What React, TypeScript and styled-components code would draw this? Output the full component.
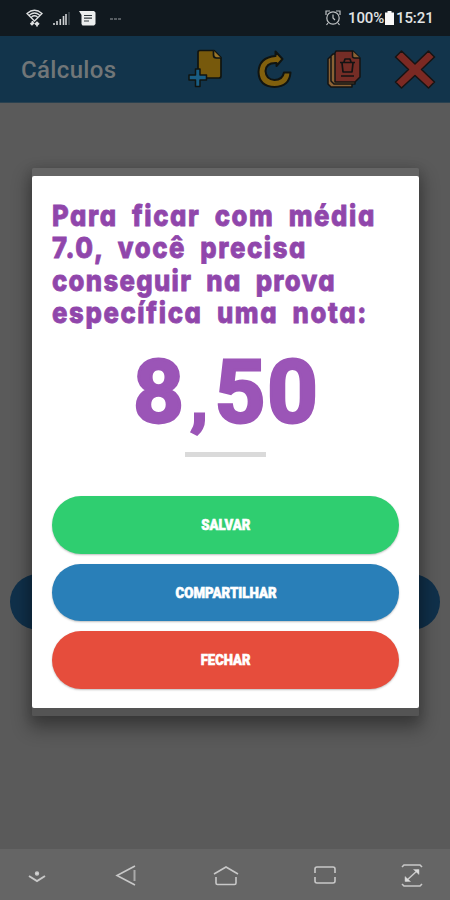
import React from "react";
import styled, { createGlobalStyle } from "styled-components";

const GlobalStyle = createGlobalStyle`
  * { box-sizing: border-box; }
  body { margin: 0; font-family: Roboto, "Liberation Sans", sans-serif; }
`;

const Screen = styled.div`
  position: relative;
  width: 450px;
  height: 900px;
  display: flex;
  flex-direction: column;
  overflow: hidden;
  background: #5a5a5a;
`;

const StatusBar = styled.header`
  height: 36px;
  flex: none;
  display: flex;
  align-items: center;
  padding: 0 18px 0 26px;
  background: #11191f;
  color: #e2e4e5;
`;

const StatusIcons = styled.div`
  flex: 1;
  display: flex;
  align-items: center;
`;

const StatusText = styled.span<{ $width: number; $left: number }>`
  width: ${(p) => p.$width}px;
  margin-left: ${(p) => p.$left}px;
  font-size: 15px;
  line-height: 18px;
  font-weight: 500;
  letter-spacing: -0.1px;
  white-space: nowrap;
`;

const AppBar = styled.div`
  height: 67px;
  flex: none;
  display: flex;
  align-items: center;
  padding: 2px 15px 0 21px;
  background: #12344b;
  border-bottom: 1px solid #294150;
`;

const AppTitle = styled.h1`
  margin: 0;
  width: 167px;
  font-size: 24px;
  line-height: 28px;
  font-weight: 500;
  letter-spacing: 0.35px;
  color: #717678;
`;

const Actions = styled.div`
  flex: 1;
  display: flex;
  justify-content: space-between;
  align-items: center;
`;

const Page = styled.main`
  flex: 1;
  padding: 471px 10px 0;
`;

const PageButton = styled.div`
  height: 56px;
  border-radius: 28px;
  background: #10304a;
`;

const NavBar = styled.nav`
  height: 51px;
  flex: none;
  display: flex;
  align-items: center;
  padding: 2px 0 0 23px;
  background: #656565;
`;

const Overlay = styled.div`
  position: absolute;
  inset: 168px 31px auto 32px;
  padding: 8px 0;
  border-radius: 2px;
  background: linear-gradient(#656565 0 50%, #545454 50%);
  box-shadow: 0 10px 18px 3px rgba(0, 0, 0, 0.33), 0 2px 12px rgba(0, 0, 0, 0.14);
`;

const Dialog = styled.section`
  height: 532px;
  display: flex;
  flex-direction: column;
  align-items: center;
  padding: 24px 20px 0;
  border-radius: 2px;
  background: #fff;
`;

const Message = styled.p`
  margin: 0;
  width: 100%;
  color: #9046ab;
  font-family: Inter, Roboto, sans-serif;
  font-feature-settings: "cv11";
  font-size: 29px;
  line-height: 32.3px;
  font-weight: 800;
  -webkit-text-stroke: 0.8px #9046ab;
`;

const Line = styled.span<{ $letter: number }>`
  display: block;
  white-space: nowrap;
  word-spacing: 8px;
  letter-spacing: ${(p) => p.$letter}px;
  transform: scaleX(0.885);
  transform-origin: left;
`;

const Grade = styled.div`
  margin-top: 15px;
  height: 96px;
  line-height: 96px;
  display: flex;
  align-items: baseline;
  justify-content: center;
  color: #9b55b7;
  font-size: 88px;
  font-weight: 700;
  -webkit-text-stroke: 3px #9b55b7;
`;

const Digit = styled.span<{ $gap: number }>`
  letter-spacing: ${(p) => p.$gap}px;
`;

const Comma = styled.span`
  width: 29px;
  padding-left: 5px;
  font-size: 68px;
  line-height: 0;
`;

const Rule = styled.hr`
  margin: 12px 0 39px;
  width: 81px;
  height: 5px;
  border: 0;
  background: #dadada;
`;

const Buttons = styled.div`
  width: 100%;
  display: grid;
  gap: 10px;
`;

const Button = styled.button<{ $color: string }>`
  height: 57.5px;
  padding: 1px 0 0 1px;
  border: 0;
  border-radius: 29px;
  background: ${(p) => p.$color};
  box-shadow: 0 1px 2px rgba(0, 0, 0, 0.25);
  color: #fff;
  font: 900 15px Roboto, "Liberation Sans", sans-serif;
  -webkit-text-stroke: 0.6px #fff;
`;

const Caption = styled.span<{ $squeeze: number }>`
  display: inline-block;
  transform: scaleX(${(p) => p.$squeeze});
`;

const Icon = styled.svg<{ $left?: number }>`
  display: block;
  flex: none;
  margin-left: ${(p) => p.$left ?? 0}px;
  overflow: visible;
`;

const WifiIcon = () => (
  <Icon width="17" height="18" viewBox="0 0 17 18" fill="none" stroke="#dddfe0" strokeWidth="1.3">
    <path d="M1 4.500Q8.500 -2 16 4.500L8.500 12ZM3.500 6Q8.500 2 13.500 6M5.500 8Q8.500 5.500 11.500 8" />
    <path d="M6.500 12v3M4.500 14L6 15.500l2-2M11 17.500v-4M9 15.500l2-2l2 2" strokeWidth="1.8" />
  </Icon>
);

const SignalIcon = () => (
  <Icon $left={10} width="17" height="15" viewBox="0 0 17 15" fill="none" stroke="#d0d2d4" strokeWidth="1.6">
    <path d="M1 14v-2M4 14v-4M7.300 14V8M10.500 14V5M13 14V3" />
    <path d="M16 14V1" stroke="#515960" strokeWidth="1.2" />
  </Icon>
);

const MessageIcon = () => (
  <Icon $left={9} width="17" height="15" viewBox="0 0 17 15">
    <path d="M0 0h15l1.500 1.500V13L15 14.500H3.500L2.500 13V4Z" fill="#eceeee" />
    <path d="M5 4.500h8M5 7.200h8M5 10h5" stroke="#30383d" strokeWidth="1.2" />
  </Icon>
);

const MoreIcon = () => (
  <Icon $left={14} width="11" height="3" viewBox="0 0 11 3">
    <path d="M0 2h3M4 2h3M8 2h3" stroke="#9ba0a3" strokeWidth="1.2" />
  </Icon>
);

const AlarmIcon = () => (
  <Icon width="16" height="16" viewBox="0 0 16 16" fill="none" stroke="#c0c3c5" strokeWidth="1.2">
    <circle cx="8" cy="8" r="6.200" />
    <path d="M1 5V1h4M11 1h4v4M3 13l-1.500 2M13 13l1.500 2M8 4.500V8l2 2" />
  </Icon>
);

const BatteryIcon = () => (
  <Icon width="9" height="14" viewBox="0 0 9 14">
    <path d="M2.500 0h4v1.500H9V14H0V1.500h2.500Z" fill="#f8f8f8" />
  </Icon>
);

const AddFileIcon = () => (
  <Icon width="34" height="40" viewBox="0 0 34 40" stroke="#101411" strokeWidth="1.700" strokeLinejoin="round">
    <path d="M12 0.500h14l7 7V26q0 2-2 2H12q-2 0-2-2V2.500q0-2 2-2Z" fill="#77590c" />
    <path d="M25.500 0.500V5q0 3 3 3h4.500" fill="#99752a" />
    <path d="M7.500 19h4.500v6h6.500v5H12v6.500H7.500V30H1v-5h6.500Z" fill="#195d83" strokeWidth="1.500" />
  </Icon>
);

const RefreshIcon = () => (
  <Icon width="36" height="40" viewBox="0 0 36 40">
    <path
      d="M19.500 1.500L26.500 9L20.500 16V13Q10 12.500 9.500 21Q10 29.500 18.500 30Q26.500 30 28 22.500H34.500Q33.500 36.500 18.500 37Q3 36.500 2.500 22Q3 7.500 19.500 6Z"
      fill="#81600d"
      stroke="#101411"
      strokeWidth="2"
      strokeLinejoin="round"
    />
  </Icon>
);

const TrashFilesIcon = () => (
  <Icon width="35" height="40" viewBox="0 0 35 40" stroke="#131313" strokeWidth="1.500" strokeLinejoin="round">
    <path d="M4 7h22v30H5l-3-3V9Z" fill="#8a6235" />
    <path d="M7 4h22v30H8l-3-3V6Z" fill="#8a6235" />
    <path d="M10 1h17l7 7v19l-5 5H9V3Z" fill="#752d26" />
    <path d="M26.500 1v5q0 2 2 2H34" fill="#8a6235" />
    <path d="M16 13l1 9h9l1-9M14 12.500h15M18 12l1-3h5l1 3M15 26h13" fill="none" strokeWidth="1.700" />
  </Icon>
);

const CloseIcon = () => (
  <Icon width="40" height="40" viewBox="0 0 40 40">
    <path
      d="M6.500 1L20 14L33.500 1L39.500 7L26.500 19.500L39.500 32L33.500 38L20 25.500L6.500 38L0.500 32L13.500 19.500L0.500 7Z"
      fill="#7b2923"
      stroke="#171313"
      strokeWidth="1.500"
      strokeLinejoin="round"
    />
  </Icon>
);

const NavIcon = ({ width, left = 0, children }: { width: number; left?: number; children: React.ReactNode }) => (
  <Icon
    $left={left}
    width={width}
    height="24"
    viewBox={`0 0 ${width} 24`}
    fill="none"
    stroke="#c8c8c8"
    strokeWidth="1.600"
  >
    {children}
  </Icon>
);

const message = [
  { text: "Para ficar com média", letter: 1.8 },
  { text: "7.0, você precisa", letter: 1.8 },
  { text: "conseguir na prova", letter: 1.5 },
  { text: "específica uma nota:", letter: 1.85 },
];

const actions = [
  { label: "SALVAR", color: "#2fce70", squeeze: 0.88 },
  { label: "COMPARTILHAR", color: "#297fb8", squeeze: 0.885 },
  { label: "FECHAR", color: "#e64d3c", squeeze: 0.87 },
];

export default function App() {
  return (
    <Screen>
      <GlobalStyle />
      <StatusBar>
        <StatusIcons>
          <WifiIcon />
          <SignalIcon />
          <MessageIcon />
          <MoreIcon />
        </StatusIcons>
        <AlarmIcon />
        <StatusText $width={37} $left={7}>100%</StatusText>
        <BatteryIcon />
        <StatusText $width={36} $left={2}>15:21</StatusText>
      </StatusBar>
      <AppBar>
        <AppTitle>Cálculos</AppTitle>
        <Actions>
          <AddFileIcon />
          <RefreshIcon />
          <TrashFilesIcon />
          <CloseIcon />
        </Actions>
      </AppBar>
      <Page>
        <PageButton />
      </Page>
      <NavBar>
        <NavIcon width={28}>
          <path d="M6 12l8 5l8-5" strokeWidth="2" />
          <circle cx="14" cy="9.500" r="1.400" fill="#eee" />
        </NavIcon>
        <NavIcon width={20} left={65}>
          <path d="M19 2L1 11.500L19 21" />
          <path d="M18.500 6v11" stroke="#aaa" strokeWidth="2" />
        </NavIcon>
        <NavIcon width={26} left={77}>
          <path d="M1 10L13 3l12 7M3 13v6q0 1.500 1.500 1.500h17Q23 20.500 23 19v-6" />
        </NavIcon>
        <NavIcon width={22} left={75}>
          <path d="M1 9V5q0-2 2-2h16q2 0 2 2v4M1 13v4q0 2 2 2h16q2 0 2-2v-4" />
        </NavIcon>
        <NavIcon width={22} left={65}>
          <path d="M1 3l2-2h16l2 2M1 20l2 2h16l2-2M5 17L17 6" />
          <path d="M12.500 5.500H18v5ZM9.500 17.500H4v-5Z" fill="#ddd" strokeWidth="0.500" />
        </NavIcon>
      </NavBar>
      <Overlay>
        <Dialog>
          <Message>
            {message.map((line) => (
              <Line key={line.text} $letter={line.letter}>
                {line.text}
              </Line>
            ))}
          </Message>
          <Grade>
            <Digit $gap={2}>8</Digit>
            <Comma>,</Comma>
            <Digit $gap={2}>5</Digit>
            <Digit $gap={0}>0</Digit>
          </Grade>
          <Rule />
          <Buttons>
            {actions.map((action) => (
              <Button key={action.label} $color={action.color}>
                <Caption $squeeze={action.squeeze}>{action.label}</Caption>
              </Button>
            ))}
          </Buttons>
        </Dialog>
      </Overlay>
    </Screen>
  );
}
